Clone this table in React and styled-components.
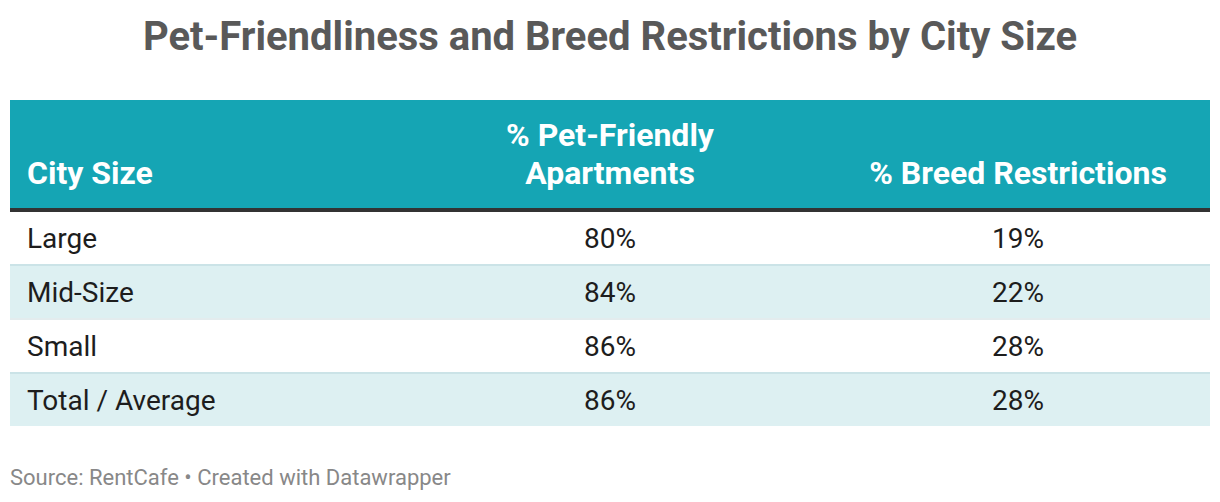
import React from "react";
import styled, { createGlobalStyle } from "styled-components";

const GlobalStyle = createGlobalStyle`
    body {
        margin: 0;
        background: #ffffff;
        font-family: Roboto, "Liberation Sans", sans-serif;
    }
`;

const Page = styled.div`
    width: 1220px;
    padding: 0 10px;
    box-sizing: border-box;
`;

const Title = styled.h1`
    margin: 0 0 40px;
    padding-top: 14px;
    font-size: 40px;
    line-height: 46px;
    font-weight: 700;
    color: #595959;
    text-align: center;
`;

const Table = styled.div`
    width: 1200px;
`;

const cols = "384px 432px 384px";

const HeadRow = styled.div`
    display: grid;
    grid-template-columns: ${cols};
    align-items: end;
    height: 112px;
    box-sizing: border-box;
    padding-bottom: 16px;
    background: #15a5b4;
    border-bottom: 4px solid #333333;
    color: #ffffff;
    font-size: 32px;
    font-weight: 700;
    line-height: 38px;
`;

const HeadCell = styled.div`
    text-align: ${(p) => (p.$left ? "left" : "center")};
    padding-left: ${(p) => (p.$left ? "17px" : "0")};
`;

const Row = styled.div`
    display: grid;
    grid-template-columns: ${cols};
    align-items: center;
    height: ${(p) => (p.$first ? "52px" : "54px")};
    box-sizing: border-box;
    border-top: ${(p) => (p.$first ? "none" : `2px solid ${p.$striped ? "#cbe3e7" : "#e3ecee"}`)};
    background: ${(p) => (p.$striped ? "#ddf0f2" : "#ffffff")};
    color: #1d1d1d;
    font-size: 28px;
`;

const Cell = styled.div`
    text-align: ${(p) => (p.$left ? "left" : "center")};
    padding-left: ${(p) => (p.$left ? "17px" : "0")};
`;

const Footer = styled.div`
    margin-top: 40px;
    font-size: 22px;
    line-height: 24px;
    color: #888888;
`;

const rows = [
    { size: "Large", pet: "80%", breed: "19%" },
    { size: "Mid-Size", pet: "84%", breed: "22%" },
    { size: "Small", pet: "86%", breed: "28%" },
    { size: "Total / Average", pet: "86%", breed: "28%" },
];

export default function App() {
    return (
        <Page>
            <GlobalStyle />
            <Title>Pet-Friendliness and Breed Restrictions by City Size</Title>
            <Table>
                <HeadRow>
                    <HeadCell $left>City Size</HeadCell>
                    <HeadCell>% Pet-Friendly<br />Apartments</HeadCell>
                    <HeadCell>% Breed Restrictions</HeadCell>
                </HeadRow>
                {rows.map((r, i) => (
                    <Row key={r.size} $first={i === 0} $striped={i % 2 === 1}>
                        <Cell $left>{r.size}</Cell>
                        <Cell>{r.pet}</Cell>
                        <Cell>{r.breed}</Cell>
                    </Row>
                ))}
            </Table>
            <Footer>Source: RentCafe • Created with Datawrapper</Footer>
        </Page>
    );
}
